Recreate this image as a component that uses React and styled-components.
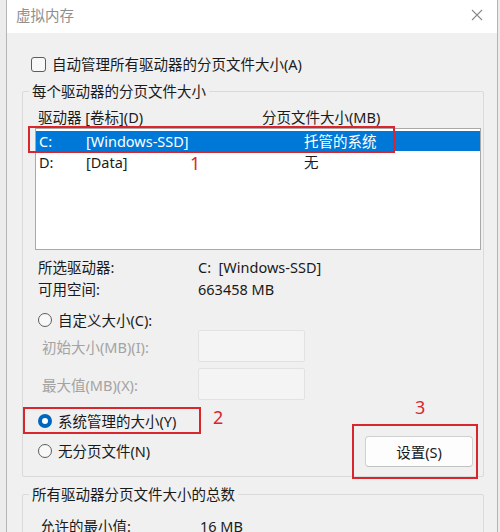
import React from "react";
import styled, { createGlobalStyle } from "styled-components";

const Global = createGlobalStyle`
  html, body { margin: 0; padding: 0; }
  body {
    background: #ececec;
    overflow: hidden;
    font-family: "Noto Sans", "Noto Sans CJK SC", sans-serif;
    font-size: 14.5px;
    color: #1a1a1a;
  }
`;

const Window = styled.div`
  position: relative;
  margin-left: 6px;
  width: 490px;
  min-height: 560px;
  border-left: 1px solid #b4b4b4;
  border-right: 1px solid #b4b4b4;
  background: #f0f0f0;
  display: flex;
  flex-direction: column;
`;

const TitleBar = styled.div`
  flex: none;
  height: 33px;
  background: #ffffff;
  display: flex;
  align-items: center;
  justify-content: space-between;
  padding-left: 9px;
  padding-right: 14px;
`;

const Title = styled.span`
  color: #8f8f8f;
  font-size: 14.5px;
  line-height: 20px;
  margin-top: -3px;
`;

const CloseIcon = () => (
  <svg width="12" height="12" viewBox="0 0 12 12" style={{ marginTop: -3 }}>
    <path d="M1 1 L11 11 M11 1 L1 11" stroke="#8a8a8a" strokeWidth="1.1" fill="none" />
  </svg>
);

const Content = styled.div`
  flex: none;
  display: flex;
  flex-direction: column;
  padding-top: 21px;
`;

const CheckRow = styled.label`
  display: flex;
  align-items: center;
  gap: 6px;
  height: 20px;
  padding-left: 24px;
  line-height: 20px;
`;

const Checkbox = styled.span`
  width: 13px;
  height: 13px;
  border: 1px solid #5c5c5c;
  border-radius: 3px;
  background: #f8f8f8;
  flex: none;
`;

const Group = styled.div`
  flex: none;
  margin-left: 15px;
  margin-top: ${(p) => p.$mt}px;
  width: 460px;
  border: 1px solid #dadada;
  border-radius: 2px;
  display: flex;
  flex-direction: column;
  padding-bottom: ${(p) => p.$pb}px;
`;

const GroupLabel = styled.span`
  align-self: flex-start;
  margin-top: -11px;
  margin-left: 6px;
  padding: 0 3px;
  background: #f0f0f0;
  line-height: 20px;
  height: 20px;
`;

const HeaderRow = styled.div`
  display: grid;
  grid-template-columns: 224px 1fr;
  height: 20px;
  line-height: 20px;
  margin-top: 6px;
  padding-left: 15px;
`;

const ListBox = styled.div`
  flex: none;
  margin-top: 1px;
  margin-left: 12px;
  width: 446px;
  border: 1px solid #a9a9a9;
  background: #ffffff;
  padding-top: 2px;
  box-sizing: border-box;
  height: 122px;
  display: flex;
  flex-direction: column;
  gap: 1px;
`;

const ListRow = styled.div`
  display: grid;
  grid-template-columns: 47px 218px 1fr;
  height: 20px;
  line-height: 20px;
  padding-left: 3px;
  background: ${(p) => (p.$selected ? "#0078d7" : "transparent")};
  color: ${(p) => (p.$selected ? "#ffffff" : "#1a1a1a")};
`;

const InfoGrid = styled.div`
  display: grid;
  grid-template-columns: 160px 1fr;
  row-gap: 2px;
  margin-top: 7px;
  padding-left: 15px;
  line-height: 20px;
`;

const RadioRow = styled.label`
  display: flex;
  align-items: center;
  gap: 6px;
  height: 20px;
  line-height: 20px;
  padding-left: 15px;
  margin-top: ${(p) => p.$mt}px;
`;

const Radio = styled.span`
  width: 14px;
  height: 14px;
  box-sizing: border-box;
  border-radius: 50%;
  flex: none;
  border: ${(p) => (p.$checked ? "none" : "1px solid #5c5c5c")};
  background: ${(p) => (p.$checked ? "#0067c0" : "#f8f8f8")};
  display: flex;
  align-items: center;
  justify-content: center;
  &::after {
    content: "";
    display: ${(p) => (p.$checked ? "block" : "none")};
    width: 6px;
    height: 6px;
    border-radius: 50%;
    background: #ffffff;
  }
`;

const SizeRow = styled.div`
  display: grid;
  grid-template-columns: 156px 107px;
  align-items: center;
  margin-top: ${(p) => p.$mt}px;
  padding-left: 19px;
  color: #a3a3a3;
`;

const SizeInput = styled.div`
  height: 32px;
  box-sizing: border-box;
  border: 1px solid #e2e2e2;
  background: #f4f4f4;
  border-radius: 2px;
`;

const BottomRow = styled.div`
  display: flex;
  align-items: flex-end;
  justify-content: space-between;
  margin-top: 11px;
`;

const RadioColumn = styled.div`
  display: flex;
  flex-direction: column;
  padding-bottom: 6px;
`;

const Button = styled.button`
  width: 108px;
  height: 31px;
  margin-right: 10px;
  border: 1px solid #d0d0d0;
  border-bottom-color: #c2c2c2;
  border-radius: 4px;
  background: #fdfdfd;
  font: inherit;
  color: #1a1a1a;
  padding: 0;
`;

const TotalRow = styled.div`
  display: grid;
  grid-template-columns: 160px 1fr;
  margin-top: 12px;
  padding-left: 17px;
  line-height: 20px;
`;

const Mark = styled.div`
  position: absolute;
  left: ${(p) => p.$x}px;
  top: ${(p) => p.$y}px;
  width: ${(p) => p.$w}px;
  height: ${(p) => p.$h}px;
  box-sizing: border-box;
  border: 2px solid #d9262c;
  pointer-events: none;
`;

const Num = styled.span`
  position: absolute;
  left: ${(p) => p.$x}px;
  top: ${(p) => p.$y}px;
  color: #d9262c;
  font-family: "Noto Sans", sans-serif;
  font-size: 18px;
  line-height: 20px;
`;

export default function App() {
  return (
    <>
      <Global />
      <Window>
        <TitleBar>
          <Title>虚拟内存</Title>
          <CloseIcon />
        </TitleBar>
        <Content>
          <CheckRow>
            <Checkbox />
            自动管理所有驱动器的分页文件大小(A)
          </CheckRow>

          <Group $mt={17} $pb={9}>
            <GroupLabel>每个驱动器的分页文件大小</GroupLabel>
            <HeaderRow>
              <span>驱动器 [卷标](D)</span>
              <span>分页文件大小(MB)</span>
            </HeaderRow>
            <ListBox>
              <ListRow $selected>
                <span>C:</span>
                <span>[Windows-SSD]</span>
                <span>托管的系统</span>
              </ListRow>
              <ListRow>
                <span>D:</span>
                <span>[Data]</span>
                <span>无</span>
              </ListRow>
            </ListBox>
            <InfoGrid>
              <span>所选驱动器:</span>
              <span>C:&nbsp; [Windows-SSD]</span>
              <span>可用空间:</span>
              <span>663458 MB</span>
            </InfoGrid>
            <RadioRow $mt={11}>
              <Radio />
              自定义大小(C):
            </RadioRow>
            <SizeRow $mt={0}>
              <span>初始大小(MB)(I):</span>
              <SizeInput />
            </SizeRow>
            <SizeRow $mt={6}>
              <span>最大值(MB)(X):</span>
              <SizeInput />
            </SizeRow>
            <BottomRow>
              <RadioColumn>
                <RadioRow $mt={0}>
                  <Radio $checked />
                  系统管理的大小(Y)
                </RadioRow>
                <RadioRow $mt={10}>
                  <Radio />
                  无分页文件(N)
                </RadioRow>
              </RadioColumn>
              <Button>设置(S)</Button>
            </BottomRow>
          </Group>

          <Group $mt={17} $pb={40}>
            <GroupLabel>所有驱动器分页文件大小的总数</GroupLabel>
            <TotalRow>
              <span>允许的最小值:</span>
              <span>16 MB</span>
            </TotalRow>
          </Group>
        </Content>

        <Mark $x={21} $y={126} $w={367} $h={27} />
        <Num $x={183} $y={153}>1</Num>
        <Mark $x={16} $y={407} $w={178} $h={27} />
        <Num $x={206} $y={407}>2</Num>
        <Mark $x={345} $y={424} $w={126} $h={55} />
        <Num $x={408} $y={397}>3</Num>
      </Window>
    </>
  );
}
